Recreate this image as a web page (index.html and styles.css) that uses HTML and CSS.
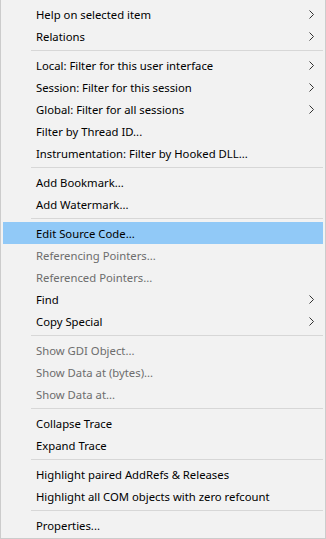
FILE: index.html
```html
<!DOCTYPE html>
<html lang="en">
<head>
  <meta charset="UTF-8">
  <title>Context Menu</title>
  <link rel="stylesheet" href="styles.css">
</head>
<body>
<div class="menu">
  <div class="item"><span>Help on selected item</span><svg class="arrow" width="5" height="9" viewBox="0 0 5 9"><path d="M0.5 0.5 L4.5 4.5 L0.5 8.5"/></svg></div>
  <div class="item"><span>Relations</span><svg class="arrow" width="5" height="9" viewBox="0 0 5 9"><path d="M0.5 0.5 L4.5 4.5 L0.5 8.5"/></svg></div>
  <div class="sep"></div>
  <div class="item"><span>Local: Filter for this user interface</span><svg class="arrow" width="5" height="9" viewBox="0 0 5 9"><path d="M0.5 0.5 L4.5 4.5 L0.5 8.5"/></svg></div>
  <div class="item"><span>Session: Filter for this session</span><svg class="arrow" width="5" height="9" viewBox="0 0 5 9"><path d="M0.5 0.5 L4.5 4.5 L0.5 8.5"/></svg></div>
  <div class="item"><span>Global: Filter for all sessions</span><svg class="arrow" width="5" height="9" viewBox="0 0 5 9"><path d="M0.5 0.5 L4.5 4.5 L0.5 8.5"/></svg></div>
  <div class="item"><span>Filter by Thread ID...</span></div>
  <div class="item"><span>Instrumentation: Filter by Hooked DLL...</span></div>
  <div class="sep"></div>
  <div class="item"><span>Add Bookmark...</span></div>
  <div class="item"><span>Add Watermark...</span></div>
  <div class="sep"></div>
  <div class="item active"><span>Edit Source Code...</span></div>
  <div class="item disabled"><span>Referencing Pointers...</span></div>
  <div class="item disabled"><span>Referenced Pointers...</span></div>
  <div class="item"><span>Find</span><svg class="arrow" width="5" height="9" viewBox="0 0 5 9"><path d="M0.5 0.5 L4.5 4.5 L0.5 8.5"/></svg></div>
  <div class="item"><span>Copy Special</span><svg class="arrow" width="5" height="9" viewBox="0 0 5 9"><path d="M0.5 0.5 L4.5 4.5 L0.5 8.5"/></svg></div>
  <div class="sep"></div>
  <div class="item disabled"><span>Show GDI Object...</span></div>
  <div class="item disabled"><span>Show Data at (bytes)...</span></div>
  <div class="item disabled"><span>Show Data at...</span></div>
  <div class="sep"></div>
  <div class="item"><span>Collapse Trace</span></div>
  <div class="item"><span>Expand Trace</span></div>
  <div class="sep"></div>
  <div class="item"><span>Highlight paired AddRefs &amp; Releases</span></div>
  <div class="item"><span>Highlight all COM objects with zero refcount</span></div>
  <div class="sep"></div>
  <div class="item"><span>Properties...</span></div>
</div>
</body>
</html>
```

FILE: styles.css
```css
body {
  margin: 0;
  font-family: "Noto Sans", "DejaVu Sans", sans-serif;
  font-size: 11.3px;
}

.menu {
  width: 326px;
  box-sizing: border-box;
  background-color: #f2f2f2;
  border: 1px solid #cccccc;
  border-top: none;
  padding: 3px 2px 2px 2px;
}

.item {
  display: flex;
  align-items: center;
  justify-content: space-between;
  height: 22px;
  padding: 0 9px 0 33px;
  color: #000;
  white-space: nowrap;
}

.item.active {
  background-color: #91c9f7;
}

.item.disabled {
  color: #6d6d6d;
}

.arrow {
  display: block;
}

.arrow path {
  fill: none;
  stroke: #333;
  stroke-width: 1;
}

.sep {
  height: 1px;
  margin: 3px 0 3px 28px;
  background-color: #d7d7d7;
}
```
